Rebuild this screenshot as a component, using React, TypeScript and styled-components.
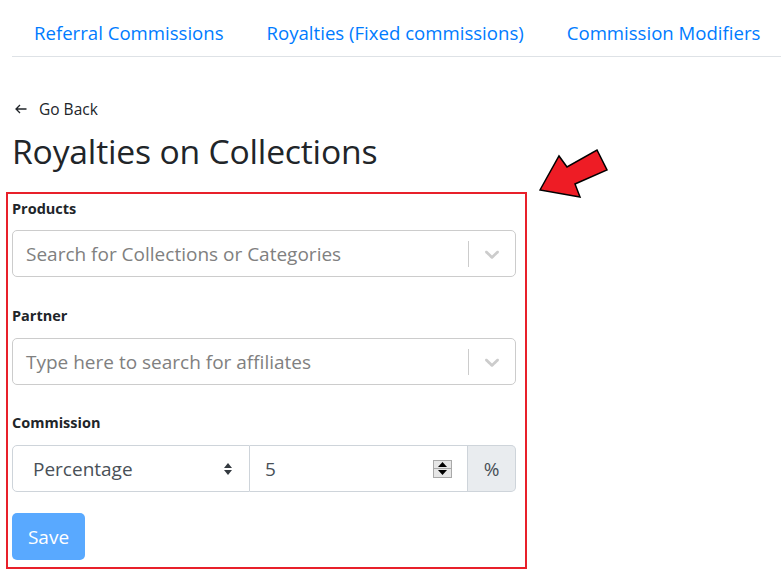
import React from "react";
import styled, { createGlobalStyle } from "styled-components";

const GlobalStyle = createGlobalStyle`
  html, body { margin: 0; padding: 0; background: #fff; }
  body {
    font-family: "Open Sans", "Noto Sans", sans-serif;
    color: #212529;
    -webkit-font-smoothing: antialiased;
  }
  * { box-sizing: border-box; }
`;

const Page = styled.div`
  width: 781px;
  height: 575px;
  overflow: hidden;
  padding-left: 12px;
  position: relative;
`;

const Tabs = styled.nav`
  display: flex;
  border-bottom: 1px solid #dee2e6;
  height: 57px;
`;

const Tab = styled.a`
  display: block;
  padding: 18px 21px 0 22px;
  font-size: 18.6px;
  line-height: 29px;
  color: #007bff;
  white-space: nowrap;
  text-decoration: none;
`;

const Main = styled.div`
  width: 504px;
`;

const BackLink = styled.a`
  display: flex;
  align-items: center;
  gap: 12px;
  margin-top: 40px;
  margin-left: 3px;
  font-size: 15.5px;
  line-height: 24px;
  color: #212529;
  text-decoration: none;
`;

const Title = styled.h1`
  margin: 9px 0 0 0;
  font-weight: 400;
  font-size: 33.7px;
  line-height: 42px;
  color: #212529;
  letter-spacing: -0.2px;
`;

const Highlight = styled.form`
  margin: 20px 0 0 -6px;
  width: 521px;
  border: 2px solid #e8202a;
  padding: 4px 9px 7px 4px;
  display: flex;
  flex-direction: column;
`;

const Label = styled.label<{ $gap: number; $after: number }>`
  display: block;
  margin-top: ${(p) => p.$gap}px;
  margin-bottom: ${(p) => p.$after}px;
  font-size: 14.5px;
  font-weight: 700;
  line-height: 21px;
`;

const SelectBox = styled.div`
  display: flex;
  align-items: center;
  height: 47px;
  border: 1px solid #ccc;
  border-radius: 5px;
  background: #fff;
`;

const Placeholder = styled.span`
  flex: 1;
  padding-left: 13px;
  font-size: 19px;
  color: #808080;
  white-space: nowrap;
`;

const Separator = styled.span`
  width: 1px;
  height: 26px;
  background: #ccc;
`;

const Indicator = styled.span`
  display: flex;
  padding: 0 11px 0 11px;
  color: #ccc;
`;

const InputGroup = styled.div`
  display: flex;
  height: 47px;
`;

const TypeSelect = styled.div`
  width: 238px;
  display: flex;
  align-items: center;
  justify-content: space-between;
  padding: 0 16px 0 20px;
  border: 1px solid #ced4da;
  border-radius: 5px 0 0 5px;
  font-size: 19px;
  color: #495057;
`;

const NumberField = styled.div`
  width: 218px;
  display: flex;
  align-items: center;
  justify-content: space-between;
  padding: 0 15px 0 15px;
  border: 1px solid #ced4da;
  border-left: none;
  font-size: 19px;
  color: #495057;
`;

const Spinner = styled.span`
  display: flex;
  flex-direction: column;
  width: 19px;
  height: 18px;
  border: 1px solid #a9a9a9;
  background: #e6e6e6;
`;

const SpinHalf = styled.span`
  flex: 1;
  display: flex;
  align-items: center;
  justify-content: center;
  & + & { border-top: 1px solid #a9a9a9; }
`;

const Addon = styled.div`
  flex: 1;
  display: flex;
  align-items: center;
  justify-content: center;
  background: #e9ecef;
  border: 1px solid #ced4da;
  border-left: none;
  border-radius: 0 5px 5px 0;
  font-size: 19px;
  color: #495057;
`;

const SaveButton = styled.button`
  margin-top: 21px;
  width: 73px;
  height: 47px;
  border: none;
  border-radius: 5px;
  background: #59a9ff;
  color: #fff;
  font-family: inherit;
  font-size: 19px;
  padding: 0;
`;

const Pointer = styled.svg`
  position: absolute;
  left: 535px;
  top: 145px;
`;

const Chevron = () => (
  <svg width="24" height="24" viewBox="0 0 20 20" fill="currentColor">
    <path d="M4.516 7.548c0.436-0.446 1.043-0.481 1.576 0l3.908 3.747 3.908-3.747c0.533-0.481 1.141-0.446 1.574 0 0.436 0.445 0.408 1.197 0 1.615-0.406 0.418-4.695 4.502-4.695 4.502-0.217 0.223-0.502 0.335-0.787 0.335s-0.57-0.112-0.789-0.335c0 0-4.287-4.084-4.695-4.502s-0.436-1.17 0-1.615z" />
  </svg>
);

const Search = ({ text }: { text: string }) => (
  <SelectBox>
    <Placeholder>{text}</Placeholder>
    <Separator />
    <Indicator>
      <Chevron />
    </Indicator>
  </SelectBox>
);

export default function App() {
  return (
    <Page>
      <GlobalStyle />
      <Tabs>
        <Tab>Referral Commissions</Tab>
        <Tab>Royalties (Fixed commissions)</Tab>
        <Tab>Commission Modifiers</Tab>
      </Tabs>
      <Main>
        <BackLink>
          <svg width="12" height="10" viewBox="0 0 12 10" fill="none" stroke="#212529" strokeWidth="1.3">
            <path d="M11.5 5H1M5 1L1 5l4 4" />
          </svg>
          Go Back
        </BackLink>
        <Title>Royalties on Collections</Title>
        <Highlight>
          <Label $gap={0} $after={11}>Products</Label>
          <Search text="Search for Collections or Categories" />
          <Label $gap={28} $after={12}>Partner</Label>
          <Search text="Type here to search for affiliates" />
          <Label $gap={27} $after={12}>Commission</Label>
          <InputGroup>
            <TypeSelect>
              Percentage
              <svg width="10" height="14" viewBox="0 0 10 14" fill="#343a40">
                <path d="M5 1L9 6H1z M5 13L1 8h8z" />
              </svg>
            </TypeSelect>
            <NumberField>
              5
              <Spinner>
                <SpinHalf>
                  <svg width="9" height="5" viewBox="0 0 9 5"><path d="M4.5 0L9 5H0z" fill="#000" /></svg>
                </SpinHalf>
                <SpinHalf>
                  <svg width="9" height="5" viewBox="0 0 9 5"><path d="M0 0h9L4.5 5z" fill="#000" /></svg>
                </SpinHalf>
              </Spinner>
            </NumberField>
            <Addon>%</Addon>
          </InputGroup>
          <div>
            <SaveButton type="button">Save</SaveButton>
          </div>
        </Highlight>
      </Main>
      <Pointer width="75" height="55" viewBox="0 0 75 55">
        <path
          d="M5 45 L24 11 L32 22 L62 5 L72 25 L40 39 L45 52 Z"
          fill="#ee1c25"
          stroke="#000"
          strokeWidth="1.5"
          strokeLinejoin="miter"
        />
      </Pointer>
    </Page>
  );
}
